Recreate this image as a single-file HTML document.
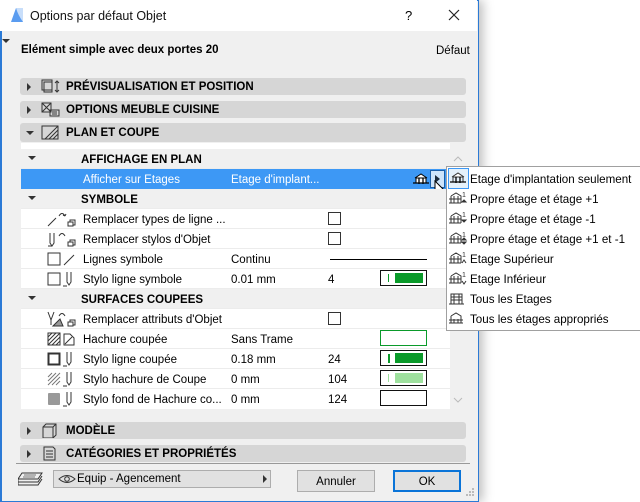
<!DOCTYPE html>
<html><head><meta charset="utf-8"><style>
*{box-sizing:border-box;margin:0;padding:0}
body{width:640px;height:502px;background:#fff;position:relative;overflow:hidden;font-family:"Liberation Sans",sans-serif;font-size:11.5px;color:#000}
.a{position:absolute}
.win{left:0;top:0;width:479px;height:502px;border:1px solid #2b7ad6;border-left-width:2px;background:#f0f0f0;box-shadow:4px 0 10px rgba(0,0,0,.25)}
.title{left:0;top:0;width:477px;height:31px;background:#fff}
.bar{left:20px;width:446px;height:17px;background:#d6d6d6;border-radius:3px;font-weight:bold;font-size:11.5px;line-height:17px}
.bar .t{left:46px;top:1px}
.bar .tri{left:7px;top:5px;width:0;height:0;border-left:4px solid #333;border-top:4px solid transparent;border-bottom:4px solid transparent}
.tbl{left:21px;top:143px;width:429px;height:266px;background:#fff}
.row{left:21px;width:429px;height:20px;border-bottom:1px solid #ececec;line-height:19px}
.row > div:not(.cb):not(.sw){top:2px}
.hdr{background:#f0f0f0;font-weight:bold}
.dn{width:0;height:0;border-top:4px solid #333;border-left:4px solid transparent;border-right:4px solid transparent}
.row > .dn{top:7px !important}
.cb{width:13px;height:13px;border:1px solid #333;background:#fff}
.sw{width:47px;height:16px;border:1px solid #111;background:#fff}
.menu{left:446px;top:166px;width:194px;height:165px;background:#fff;border:1px solid #a0a0a0;border-right:none}
.mi{left:24px;font-size:11.6px}
</style></head><body>
<div class="a win"></div>
<div class="a title"></div>
<svg class="a" style="left:10px;top:7px" width="14" height="16"><path d="M1 15 L6 1 L13 1 L13 15 Z" fill="#5a9cf0"/><path d="M6 1 Q8 8 13 15 L13 1 Z" fill="#c8defa"/></svg>
<div class="a" style="left:30px;top:9px;font-size:12.5px;color:#111">Options par défaut Objet</div>
<div class="a" style="left:405px;top:8px;font-size:13px">?</div>
<svg class="a" style="left:448px;top:9px" width="12" height="12"><path d="M1 1L11 11M11 1L1 11" stroke="#222" stroke-width="1.2"/></svg>
<div class="a dn" style="left:2px;top:39px"></div>
<div class="a" style="left:21px;top:44px;font-weight:bold;font-size:11.5px">Elément simple avec deux portes 20</div>
<div class="a" style="left:436px;top:45px;font-size:11.5px">Défaut</div>

<div class="a bar" style="top:78px"><div class="a tri"></div><div class="a t">PRÉVISUALISATION ET POSITION</div>
<svg class="a" style="left:21px;top:1px" width="20" height="15"><rect x="1" y="1" width="10" height="10" fill="none" stroke="#333"/><rect x="3" y="3" width="8" height="10" fill="none" stroke="#333"/><path d="M16 2v11M14 4l2-2 2 2M14 11l2 2 2-2" stroke="#333" fill="none"/></svg></div>
<div class="a bar" style="top:101px"><div class="a tri"></div><div class="a t">OPTIONS MEUBLE CUISINE</div>
<svg class="a" style="left:21px;top:1px" width="20" height="15"><rect x="1" y="1" width="9" height="9" fill="none" stroke="#333"/><path d="M1 1l9 9M10 1l-9 9" stroke="#333"/><rect x="9" y="8" width="9" height="6" fill="none" stroke="#333"/><path d="M11 10h5M11 12h5" stroke="#333"/></svg></div>
<div class="a bar" style="top:123px;height:19px;line-height:19px"><div class="a dn" style="left:6px;top:8px"></div><div class="a t">PLAN ET COUPE</div>
<svg class="a" style="left:21px;top:2px" width="20" height="15"><rect x="1" y="1" width="16" height="13" fill="none" stroke="#333"/><path d="M8 14L17 5M12 14L17 9M4 14L17 1" stroke="#333"/></svg></div>

<div class="a tbl"></div>
<div class="a" style="left:450px;top:143px;width:16px;height:266px;background:#f0f0f0"></div>
<svg class="a" style="left:453px;top:155px" width="10" height="8"><path d="M1 6L5 2L9 6" stroke="#bbb" fill="none"/></svg>
<svg class="a" style="left:453px;top:396px" width="10" height="8"><path d="M1 2L5 6L9 2" stroke="#bbb" fill="none"/></svg>

<div class="a row hdr" style="top:149px"><div class="a dn" style="left:7px"></div><div class="a" style="left:60px">AFFICHAGE EN PLAN</div></div>
<div class="a row" style="top:169px;width:425px;background:#3d98f5;color:#fff;border:none"><div class="a" style="left:62px">Afficher sur Etages</div><div class="a" style="left:210px">Etage d'implant...</div>
<svg class="a" style="left:392px;top:3px" width="16" height="14"><path d="M2 6L8 2L14 6" stroke="#000" fill="#fff"/><rect x="3" y="6" width="10" height="5" fill="#fff" stroke="#000"/><path d="M6 6v6M10 6v6M0 11h16" stroke="#000" stroke-width="1.3"/></svg>
<div class="a" style="left:409px;top:1px !important;width:15px;height:18px;background:#cde4fb;border:1px solid #1a5ea8"></div>
<div class="a" style="left:414px;top:6px !important;width:0;height:0;border-left:5px solid #1b2a3a;border-top:4px solid transparent;border-bottom:4px solid transparent"></div></div>
<svg class="a" style="left:434px;top:180px" width="14" height="20"><path d="M1 1L1 15L4 12L7 18L9 17L6 11L11 11Z" fill="#fff" stroke="#000"/></svg>
<div class="a row hdr" style="top:189px"><div class="a dn" style="left:7px"></div><div class="a" style="left:60px">SYMBOLE</div></div>
<div class="a row" style="top:209px"><div class="a" style="left:62px">Remplacer types de ligne ...</div><div class="a cb" style="left:307px;top:3px"></div>
<svg class="a" style="left:26px;top:2px" width="36" height="16"><path d="M1 15L9 7M12 5Q15 0 18 5M18 5l-2-1M18 5l1-2" stroke="#333" fill="none"/><rect x="23" y="9" width="5" height="5" fill="none" stroke="#333"/><rect x="21" y="11" width="5" height="4" fill="#fff" stroke="#333"/></svg></div>
<div class="a row" style="top:229px"><div class="a" style="left:62px">Remplacer stylos d'Objet</div><div class="a cb" style="left:307px;top:3px"></div>
<svg class="a" style="left:26px;top:2px" width="36" height="16"><path d="M3 2v10l2 3 2-3V2M1 15h4" stroke="#333" fill="none"/><path d="M12 5Q15 0 18 5" stroke="#333" fill="none"/><rect x="23" y="9" width="5" height="5" fill="none" stroke="#333"/><rect x="21" y="11" width="5" height="4" fill="#fff" stroke="#333"/></svg></div>
<div class="a row" style="top:249px"><div class="a" style="left:62px">Lignes symbole</div><div class="a" style="left:210px">Continu</div><div class="a" style="left:309px;top:10px !important;width:97px;height:1px;background:#000"></div>
<svg class="a" style="left:26px;top:2px" width="36" height="16"><rect x="1" y="2" width="12" height="12" fill="none" stroke="#333"/><path d="M17 14L27 4" stroke="#333"/></svg></div>
<div class="a row" style="top:269px"><div class="a" style="left:62px">Stylo ligne symbole</div><div class="a" style="left:210px">0.01 mm</div><div class="a" style="left:307px">4</div>
<div class="a sw" style="left:359px;top:1px"><div class="a" style="left:7px;top:3px;width:1px;height:8px;background:#0a9a2a"></div><div class="a" style="left:14px;top:2px;width:28px;height:10px;background:#0a9a2a"></div></div>
<svg class="a" style="left:26px;top:2px" width="36" height="16"><rect x="1" y="2" width="12" height="12" fill="none" stroke="#333"/><path d="M20 1v10l2 3 2-3V1M16 15h4" stroke="#333" fill="none"/></svg></div>
<div class="a row hdr" style="top:289px"><div class="a dn" style="left:7px"></div><div class="a" style="left:60px">SURFACES COUPEES</div></div>
<div class="a row" style="top:309px"><div class="a" style="left:62px">Remplacer attributs d'Objet</div><div class="a cb" style="left:307px;top:3px"></div>
<svg class="a" style="left:26px;top:2px" width="36" height="16"><path d="M1 1l3 8 3-8M4 9v5" stroke="#333" fill="none"/><path d="M6 15L13 8L16 15Z" fill="#999" stroke="#333"/><path d="M12 5Q15 0 18 5" stroke="#333" fill="none"/><rect x="23" y="9" width="5" height="5" fill="none" stroke="#333"/><rect x="21" y="11" width="5" height="4" fill="#fff" stroke="#333"/></svg></div>
<div class="a row" style="top:329px"><div class="a" style="left:62px">Hachure coupée</div><div class="a" style="left:210px">Sans Trame</div>
<div class="a sw" style="left:359px;top:1px;border-color:#0a9a2a"></div>
<svg class="a" style="left:26px;top:2px" width="36" height="16"><rect x="1" y="2" width="12" height="12" fill="none" stroke="#333"/><path d="M1 10L9 2M1 6L5 2M5 14L13 6M9 14L13 10M1 14L13 2" stroke="#333"/><path d="M17 3h6l4 4v7h-10z" fill="none" stroke="#333"/><path d="M18 13l7-7" stroke="#333"/></svg></div>
<div class="a row" style="top:349px"><div class="a" style="left:62px">Stylo ligne coupée</div><div class="a" style="left:210px">0.18 mm</div><div class="a" style="left:307px">24</div>
<div class="a sw" style="left:359px;top:1px"><div class="a" style="left:7px;top:3px;width:2px;height:9px;background:#0a9a2a"></div><div class="a" style="left:14px;top:2px;width:28px;height:10px;background:#0a9a2a"></div></div>
<svg class="a" style="left:26px;top:2px" width="36" height="16"><rect x="1.5" y="2.5" width="11" height="11" fill="none" stroke="#333" stroke-width="2"/><path d="M20 1v10l2 3 2-3V1M16 15h4" stroke="#333" fill="none"/></svg></div>
<div class="a row" style="top:369px"><div class="a" style="left:62px">Stylo hachure de Coupe</div><div class="a" style="left:210px">0 mm</div><div class="a" style="left:307px">104</div>
<div class="a sw" style="left:359px;top:1px"><div class="a" style="left:7px;top:3px;width:1px;height:8px;background:#9ee09e"></div><div class="a" style="left:14px;top:2px;width:28px;height:10px;background:#9ee09e"></div></div>
<svg class="a" style="left:26px;top:2px" width="36" height="16"><path d="M1 10L9 2M1 6L5 2M5 14L13 6M9 14L13 10M1 14L13 2" stroke="#777"/><path d="M20 1v10l2 3 2-3V1M16 15h4" stroke="#333" fill="none"/></svg></div>
<div class="a row" style="top:389px;border:none"><div class="a" style="left:62px">Stylo fond de Hachure co...</div><div class="a" style="left:210px">0 mm</div><div class="a" style="left:307px">124</div>
<div class="a sw" style="left:359px;top:1px"></div>
<svg class="a" style="left:26px;top:2px" width="36" height="16"><rect x="1" y="2" width="12" height="12" rx="1" fill="#999"/><path d="M20 1v10l2 3 2-3V1M16 15h4" stroke="#333" fill="none"/></svg></div>

<div class="a bar" style="top:422px"><div class="a tri"></div><div class="a t">MODÈLE</div>
<svg class="a" style="left:21px;top:1px" width="20" height="15"><path d="M2 4l3-3h10v11l-3 3H2z M2 4h10v11 M12 4l3-3" fill="none" stroke="#333"/></svg></div>
<div class="a bar" style="top:445px"><div class="a tri"></div><div class="a t">CATÉGORIES ET PROPRIÉTÉS</div>
<svg class="a" style="left:21px;top:1px" width="20" height="15"><path d="M3 1h9l2 2v11H3z M5 5h7M5 8h7M5 11h7" fill="none" stroke="#333"/></svg></div>
<div class="a" style="left:16px;top:463px;width:454px;height:1px;background:#999"></div>

<svg class="a" style="left:18px;top:472px" width="26" height="16"><path d="M4 1h20l-4 6H0z M0 7v3h20l4-6M0 10v3h20l4-6" fill="none" stroke="#333"/><path d="M6 3h12M5 5h12" stroke="#777"/></svg>
<div class="a" style="left:53px;top:470px;width:218px;height:18px;background:#e1e1e1;border:1px solid #adadad"></div>
<svg class="a" style="left:58px;top:474px" width="18" height="10"><path d="M1 5Q9 -2 17 5Q9 12 1 5Z" fill="none" stroke="#333"/><circle cx="9" cy="5" r="2.3" fill="none" stroke="#333"/></svg>
<div class="a" style="left:77px;top:473px">Equip - Agencement</div>
<div class="a" style="left:263px;top:475px;width:0;height:0;border-left:4px solid #333;border-top:4px solid transparent;border-bottom:4px solid transparent"></div>
<div class="a" style="left:297px;top:470px;width:78px;height:22px;background:#e1e1e1;border:1px solid #adadad;text-align:center;line-height:22px">Annuler</div>
<div class="a" style="left:393px;top:470px;width:68px;height:22px;background:#e1e1e1;border:2px solid #0a74d8;text-align:center;line-height:20px">OK</div>

<div class="a menu"></div>
<div class="a" style="left:448px;top:168px;width:21px;height:21px;border:1px solid #3d98f5;background:#e5f1fb"></div>
<svg class="a" style="left:450px;top:171px" width="17" height="15"><path d="M2 6L8 2L14 6" stroke="#333" fill="#fff"/><rect x="3" y="6" width="10" height="5" fill="none" stroke="#333"/><path d="M6 6v6M10 6v6M0 11h16" stroke="#000" stroke-width="1.3"/></svg>
<div class="a mi" style="left:470px;top:173px">Etage d'implantation seulement</div>
<div class="a mi" style="left:470px;top:193px">Propre étage et étage +1</div>
<div class="a mi" style="left:470px;top:213px">Propre étage et étage -1</div>
<div class="a mi" style="left:470px;top:233px">Propre étage et étage +1 et -1</div>
<div class="a mi" style="left:470px;top:253px">Etage Supérieur</div>
<div class="a mi" style="left:470px;top:273px">Etage Inférieur</div>
<div class="a mi" style="left:470px;top:293px">Tous les Etages</div>
<div class="a mi" style="left:470px;top:313px">Tous les étages appropriés</div>
<svg class="a" style="left:449px;top:189px" width="20" height="140">
<g stroke="#333" fill="none">
<g transform="translate(0,2)"><path d="M2 5L7 2L12 5v7M2 5v7M5 5v7M9 5v7M0 8h12M0 12h12" /><text x="13" y="6" font-size="7" fill="#333" stroke="none" font-family="Liberation Sans">1</text><path d="M13 11l2-2 2 2z" fill="#333"/></g>
<g transform="translate(0,22)"><path d="M2 5L7 2L12 5v7M2 5v7M5 5v7M9 5v7M0 8h12M0 12h12"/><text x="13" y="6" font-size="7" fill="#333" stroke="none" font-family="Liberation Sans">1</text><path d="M13 9l2 2 2-2z" fill="#333"/></g>
<g transform="translate(0,42)"><path d="M2 5L7 2L12 5v7M2 5v7M5 5v7M9 5v7M0 8h12M0 12h12"/><text x="13" y="6" font-size="7" fill="#333" stroke="none" font-family="Liberation Sans">1</text><path d="M13 9l2-2 2 2zM13 11l2 2 2-2z" fill="#333"/></g>
<g transform="translate(0,62)"><path d="M2 5L7 2L12 5v7M2 5v7M5 5v7M9 5v7M0 8h12M0 12h12M13 12l2-3 2 3"/><text x="13" y="6" font-size="7" fill="#333" stroke="none" font-family="Liberation Sans">1</text></g>
<g transform="translate(0,82)"><path d="M2 5L7 2L12 5v7M2 5v7M5 5v7M9 5v7M0 8h12M0 12h12M13 10l2 3 2-3"/><text x="13" y="6" font-size="7" fill="#333" stroke="none" font-family="Liberation Sans">1</text></g>
<g transform="translate(0,102)"><path d="M2 3h11v10H2zM2 6h11M2 9h11M5 3v10M10 3v10M0 13h15"/></g>
<g transform="translate(0,122)"><path d="M2 5L7 2L12 5v7M2 5v7M5 8v4M9 8v4M0 9h14M0 12h14"/></g>
</g></svg>
<svg class="a" style="left:465px;top:487px" width="10" height="10"><g fill="#bbb"><rect x="7" y="1" width="2" height="2"/><rect x="4" y="4" width="2" height="2"/><rect x="7" y="4" width="2" height="2"/><rect x="1" y="7" width="2" height="2"/><rect x="4" y="7" width="2" height="2"/><rect x="7" y="7" width="2" height="2"/></g></svg>
</body></html>
